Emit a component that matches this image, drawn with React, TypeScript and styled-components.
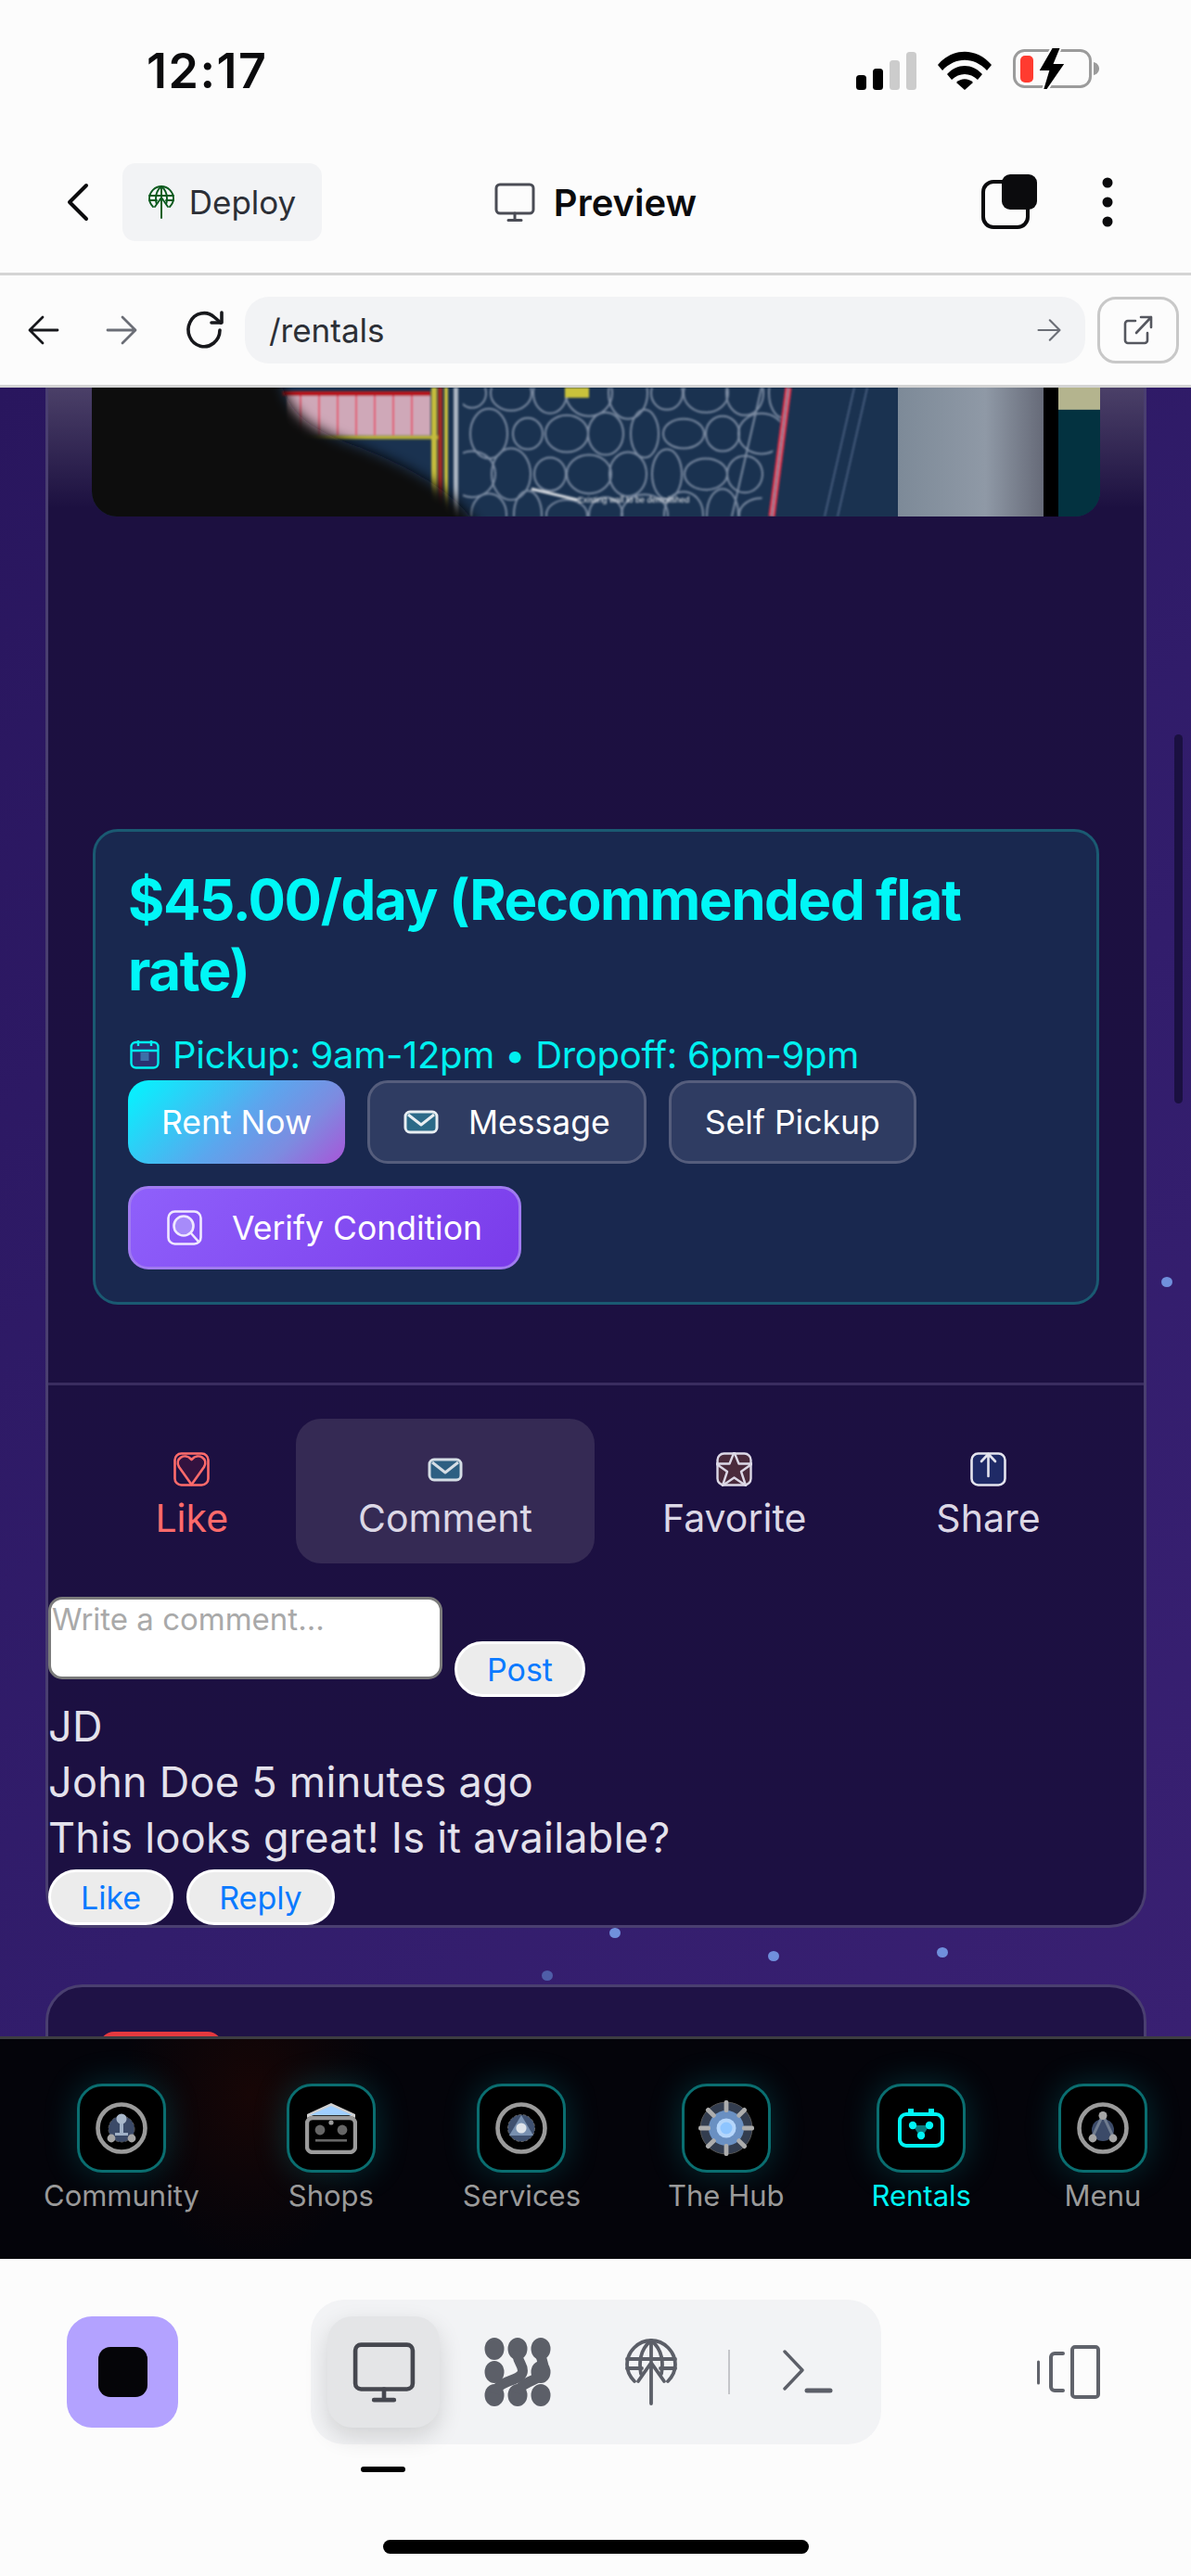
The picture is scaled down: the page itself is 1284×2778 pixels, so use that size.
import styled, { createGlobalStyle } from "styled-components";

const GlobalStyle = createGlobalStyle`
  html, body {
    margin: 0;
    padding: 0;
    background: #fcfcfc;
  }
  * {
    box-sizing: border-box;
  }
  body {
    font-family: "Inter", "Liberation Sans", sans-serif;
  }
`;

const NAV_ITEMS = [
  { label: "Community", icon: <CommunityIcon /> },
  { label: "Shops", icon: <ShopsIcon /> },
  { label: "Services", icon: <ServicesIcon /> },
  { label: "The Hub", icon: <HubIcon /> },
  { label: "Rentals", icon: <RentalsIcon />, active: true },
  { label: "Menu", icon: <MenuIcon /> },
];

const PARTICLES = [
  { x: 1252, y: 959 },
  { x: 657, y: 1661 },
  { x: 828, y: 1686 },
  { x: 1010, y: 1682 },
  { x: 584, y: 1707, dim: true },
];

function App() {
  return (
    <Phone>
      <GlobalStyle />
      <StatusBar>
        <Time>12:17</Time>
        <StatusIcons>
          <SignalIcon />
          <WifiIcon />
          <BatteryIcon />
        </StatusIcons>
      </StatusBar>

      <Header>
        <HeaderLeft>
          <svg width="24" height="42" viewBox="0 0 24 42" fill="none" stroke="#0b0b0d" strokeWidth="4" strokeLinecap="round" strokeLinejoin="round">
            <path d="M21 3 3 21l18 18" />
          </svg>
          <DeployButton>
            <GlobeUpIcon height={36} color="#0b5a1e" />
            Deploy
          </DeployButton>
        </HeaderLeft>
        <HeaderTitle>
          <MonitorIcon size={44} color="#4a4c55" />
          Preview
        </HeaderTitle>
        <HeaderRight>
          <CopyIcon />
          <MoreIcon />
        </HeaderRight>
      </Header>

      <UrlBar>
        <NavArrows>
          <ArrowIcon color="#17181c" size={34} flip />
          <ArrowIcon color="#6b6e76" size={34} />
          <svg width="46" height="46" viewBox="0 0 46 46" fill="none" stroke="#17181c" strokeWidth="3.6" strokeLinecap="round" strokeLinejoin="round">
            <path d="M39 23a17 18 0 1 1-6-14l7 6" />
            <path d="M41 4v11H30" />
          </svg>
        </NavArrows>
        <UrlField>
          /rentals
          <ArrowIcon color="#6b6e76" size={26} />
        </UrlField>
        <OpenButton>
          <svg width="34" height="34" viewBox="0 0 34 34" fill="none" stroke="#55575f" strokeWidth="2.6" strokeLinecap="round" strokeLinejoin="round">
            <path d="M14 7H6a3 3 0 0 0-3 3v18a3 3 0 0 0 3 3h18a3 3 0 0 0 3-3v-8" />
            <path d="M15 20 31 3M20 3h11v11" />
          </svg>
        </OpenButton>
      </UrlBar>

      <Feed>
        {PARTICLES.map((p) => (
          <Particle key={p.x} $x={p.x} $y={p.y} $dim={p.dim} />
        ))}
        <ScrollThumb />

        <PostCard>
          <PostImage>
            <BlueprintArt />
          </PostImage>

          <PriceBox>
            <Price>$45.00/day (Recommended flat rate)</Price>
            <Schedule>
              <CalendarIcon />
              Pickup: 9am-12pm • Dropoff: 6pm-9pm
            </Schedule>
            <ActionButtons>
              <RentButton>Rent Now</RentButton>
              <GhostButton>
                <MailIcon fill="#2b6a88" stroke="#e8eef2" />
                Message
              </GhostButton>
              <GhostButton>Self Pickup</GhostButton>
              <VerifyButton>
                <VerifyIcon />
                Verify Condition
              </VerifyButton>
            </ActionButtons>
          </PriceBox>

          <Reactions>
            <Reaction $color="#ff6b6b">
              <ReactionGlyph>
                <HeartIcon />
              </ReactionGlyph>
              Like
            </Reaction>
            <Reaction $selected>
              <ReactionGlyph>
                <MailIcon fill="#2d5f82" stroke="#d5dde5" />
              </ReactionGlyph>
              Comment
            </Reaction>
            <Reaction>
              <ReactionGlyph>
                <StarIcon />
              </ReactionGlyph>
              Favorite
            </Reaction>
            <Reaction>
              <ReactionGlyph>
                <ShareIcon />
              </ReactionGlyph>
              Share
            </Reaction>
          </Reactions>

          <CommentForm>
            <CommentInput placeholder="Write a comment..." />
            <PostButton>Post</PostButton>
          </CommentForm>

          <CommentLine>JD</CommentLine>
          <CommentLine>John Doe 5 minutes ago</CommentLine>
          <CommentLine>This looks great! Is it available?</CommentLine>
          <CommentActions>
            <PillButton>Like</PillButton>
            <PillButton>Reply</PillButton>
          </CommentActions>
        </PostCard>

        <NextCard>
          <RedBadge />
        </NextCard>
      </Feed>

      <BottomNav>
        {NAV_ITEMS.map((item) => (
          <NavItem key={item.label} $active={item.active}>
            <NavIconBox>{item.icon}</NavIconBox>
            {item.label}
          </NavItem>
        ))}
      </BottomNav>

      <AppBar>
        <AppBarRow>
          <StopButton>
            <StopSquare />
          </StopButton>
          <Toolbar>
            <ToolButton $active>
              <MonitorIcon size={68} color="#45474f" />
            </ToolButton>
            <ToolButton>
              <BlobsIcon />
            </ToolButton>
            <ToolButton>
              <GlobeUpIcon height={72} color="#5c5f68" />
            </ToolButton>
            <ToolDivider />
            <ToolButton>
              <TerminalIcon />
            </ToolButton>
          </Toolbar>
          <DevicesButton>
            <DevicesIcon />
          </DevicesButton>
        </AppBarRow>
        <TabIndicator />
        <HomeBar />
      </AppBar>
    </Phone>
  );
}

/* status bar and header icons */

function SignalIcon() {
  return (
    <svg width="65" height="41" viewBox="0 0 65 41">
      <rect x="0" y="25" width="11" height="16" rx="3.5" fill="#000" />
      <rect x="18" y="18" width="11" height="23" rx="3.5" fill="#000" />
      <rect x="36" y="9" width="11" height="32" rx="3.5" fill="#ccc" />
      <rect x="54" y="0" width="11" height="41" rx="3.5" fill="#ccc" />
    </svg>
  );
}

function WifiIcon() {
  return (
    <svg width="58" height="42" viewBox="0 0 58 42" fill="#000">
      <path d="M0 15C16-4 42-4 58 15l-5 6C39 6 19 6 5 21z" />
      <path d="M10 25c11-12 27-12 38 0l-5 6c-8-8-20-8-28 0z" />
      <path d="M20 34c5-5 13-5 18 0l-9 8z" />
    </svg>
  );
}

function BatteryIcon() {
  return (
    <svg width="94" height="46" viewBox="0 0 94 46">
      <rect x="1.5" y="3.5" width="82" height="39" rx="11" fill="none" stroke="#9b9b9b" strokeWidth="3" />
      <path d="M87 16c4 1 6 4 6 7s-2 6-6 7z" fill="#9b9b9b" />
      <rect x="8" y="9" width="14" height="29" rx="5" fill="#ff3b30" />
      <path d="M42 0 27 26h11l-6 20 5 0 20-29H45l7-17z" fill="#000" stroke="#fcfcfc" strokeWidth="2" />
    </svg>
  );
}

function CopyIcon() {
  return (
    <svg width="60" height="60" viewBox="0 0 60 60">
      <rect x="2" y="8" width="48" height="49" rx="11" fill="none" stroke="#0b0b0d" strokeWidth="4" />
      <rect x="22" y="0" width="38" height="38" rx="9" fill="#0b0b0d" />
    </svg>
  );
}

function MoreIcon() {
  return (
    <svg width="12" height="54" viewBox="0 0 12 54" fill="#0b0b0d">
      <circle cx="6" cy="6" r="5.5" />
      <circle cx="6" cy="27" r="5.5" />
      <circle cx="6" cy="48" r="5.5" />
    </svg>
  );
}

function MonitorIcon({ size, color }: { size: number; color: string }) {
  return (
    <svg width={size} height={size} viewBox="0 0 44 44" fill="none" stroke={color} strokeWidth="3" strokeLinecap="round">
      <rect x="2" y="3" width="40" height="31" rx="4" />
      <path d="M22 34v7M15 41.5h14" />
    </svg>
  );
}

function GlobeUpIcon({ height, color }: { height: number; color: string }) {
  return (
    <svg width={(height * 28) / 36} height={height} viewBox="0 0 28 36" fill="none" stroke={color} strokeWidth="1.9" strokeLinecap="round" strokeLinejoin="round">
      <path d="M5 23C2 20 1 17 1 14 1 7 7 1 14 1s13 6 13 13c0 3-1 6-4 9" />
      <path d="M8.500 19C7 11 9 5 14 1c5 4 7 10 5.500 18" />
      <path d="M1 11h26M1 16h8M19 16h8M14 1v11" />
      <path d="M14 35V14M7 23l7-10 7 10" />
    </svg>
  );
}

function ArrowIcon({ color, size, flip }: { color: string; size: number; flip?: boolean }) {
  return (
    <svg width={size} height={size} viewBox="0 0 34 34" fill="none" stroke={color} strokeWidth="2.8" strokeLinecap="round" strokeLinejoin="round" transform={flip ? "scale(-1 1)" : undefined}>
      <path d="M2 17h29M18 3l14 14-14 14" />
    </svg>
  );
}

/* post card icons */

function CalendarIcon() {
  return (
    <svg width="32" height="32" viewBox="0 0 32 32" stroke="#00f0f0" strokeWidth="2.4" fill="#2a3070">
      <rect x="1.5" y="3" width="29" height="27.5" rx="5" />
      <path d="M1.5 12h29M9 1v6M23 1v6" fill="none" />
      <rect x="11.5" y="14" width="9" height="9" fill="#3b6fa8" stroke="none" />
    </svg>
  );
}

function MailIcon({ fill, stroke }: { fill: string; stroke: string }) {
  return (
    <svg width="38" height="26" viewBox="0 0 38 26" fill={fill} stroke={stroke} strokeWidth="3" strokeLinejoin="round">
      <rect x="2" y="2" width="34" height="22" rx="5" />
      <path d="m5 5 14 11L33 5" fill="none" />
    </svg>
  );
}

function VerifyIcon() {
  return (
    <svg width="38" height="38" viewBox="0 0 38 38" fill="none" stroke="#f0e9ff" strokeWidth="2.6" strokeLinecap="round">
      <rect x="1.5" y="1.5" width="35" height="35" rx="7" />
      <circle cx="18" cy="17" r="10.5" fill="#a78bfa" />
      <path d="m26 25 8 9" />
    </svg>
  );
}

function HeartIcon() {
  return (
    <svg width="39" height="37" viewBox="0 0 39 37" fill="none" stroke="#ff6b6b" strokeWidth="2.6" strokeLinejoin="round">
      <rect x="1.5" y="1.5" width="36" height="34" rx="7" />
      <path d="M19.5 35 6 16C1 7 12 0 19.5 8 27 0 38 7 33 16z" fill="#33123f" />
    </svg>
  );
}

function StarIcon() {
  return (
    <svg width="39" height="37" viewBox="0 0 39 37" stroke="#dcd8e6" strokeWidth="2.4" strokeLinejoin="round">
      <rect x="1.5" y="1.5" width="36" height="34" rx="7" fill="#4a2b3c" />
      <path d="m19.5 0 5 12.5H39L27 21l5 15-12.5-8.5L7 36l5-15L0 12.5h14.5z" fill="#4a2b3c" />
    </svg>
  );
}

function ShareIcon() {
  return (
    <svg width="39" height="37" viewBox="0 0 39 37" fill="#1f2a66" stroke="#e4e4ee" strokeWidth="2.6" strokeLinecap="round" strokeLinejoin="round">
      <rect x="1.5" y="1.5" width="36" height="34" rx="7" />
      <path d="M19.5 26V3M12 10l7.5-8 7.5 8" fill="none" />
    </svg>
  );
}

/* bottom nav icons */

function CommunityIcon() {
  return (
    <svg width="58" height="58" viewBox="0 0 58 58">
      <circle cx="29" cy="29" r="25.5" fill="none" stroke="#9b9b9b" strokeWidth="4.6" />
      <circle cx="29" cy="30" r="14" fill="#3b4a68" stroke="#555" strokeDasharray="3 2" />
      <path d="M27 24h4v10h5v3H22v-3h5z" fill="#9fb0c6" />
      <circle cx="29" cy="19" r="5.5" fill="#a9b8cb" />
      <circle cx="18" cy="40" r="4.4" fill="#a5a5a5" />
      <circle cx="40" cy="40" r="4.4" fill="#a5a5a5" />
    </svg>
  );
}

function ShopsIcon() {
  return (
    <svg width="56" height="56" viewBox="0 0 56 56">
      <path d="M2 13 28 1l26 12v4L28 6 2 17z" fill="#d0d0d0" />
      <path d="M5 14 28 4l23 10z" fill="#9fcfff" />
      <rect x="2" y="17" width="52" height="37" rx="6" fill="#000" stroke="#9b9b9b" strokeWidth="4.4" />
      <circle cx="28" cy="22" r="2.6" fill="#9b9b9b" />
      <circle cx="16" cy="30" r="5.4" fill="#666" />
      <circle cx="40" cy="30" r="5.4" fill="#666" />
      <rect x="11" y="40" width="34" height="2.6" fill="#666" />
    </svg>
  );
}

function ServicesIcon() {
  return (
    <svg width="58" height="58" viewBox="0 0 58 58">
      <circle cx="29" cy="29" r="25.5" fill="none" stroke="#9b9b9b" strokeWidth="4.6" />
      <circle cx="29" cy="29" r="14.5" fill="#3f5170" stroke="#666" strokeDasharray="3 2" />
      <path d="M29 15 42 37H16z" fill="#7890b0" />
      <circle cx="29" cy="29" r="5.6" fill="#dfe4ea" />
    </svg>
  );
}

function HubIcon() {
  const angles = [0, 45, 90, 135, 180, 225, 270, 315];
  return (
    <svg width="60" height="60" viewBox="0 0 60 60">
      <circle cx="30" cy="30" r="28" fill="#333d4f" stroke="#555" />
      <circle cx="30" cy="30" r="19" fill="#6a90c2" />
      <circle cx="30" cy="30" r="10.5" fill="#b5d6fb" />
      <circle cx="30" cy="30" r="6.5" fill="#8ec5ff" />
      {angles.map((a) => (
        <rect key={a} x="27.6" y="0" width="4.8" height="13" rx="2" fill="#adadad" transform={`rotate(${a} 30 30)`} />
      ))}
    </svg>
  );
}

function RentalsIcon() {
  return (
    <svg width="50" height="42" viewBox="0 0 50 42">
      <rect x="2" y="6" width="46" height="34" rx="7" fill="#000" stroke="#00f5f5" strokeWidth="4" />
      <rect x="11" y="0" width="6" height="6" fill="#00f5f5" />
      <rect x="33" y="0" width="6" height="6" fill="#00f5f5" />
      <path d="M16 18h18l-9 14z" fill="#0a7a7d" />
      <circle cx="16" cy="18" r="4.2" fill="#00f5f5" />
      <circle cx="34" cy="18" r="4.2" fill="#00f5f5" />
      <circle cx="25" cy="29" r="4.2" fill="#00f5f5" />
    </svg>
  );
}

function MenuIcon() {
  return (
    <svg width="58" height="58" viewBox="0 0 58 58">
      <circle cx="29" cy="29" r="25.5" fill="none" stroke="#9b9b9b" strokeWidth="4.6" />
      <circle cx="29" cy="31" r="12" fill="#3b4a68" />
      <path d="M29 15 18 38M29 15l11 23" stroke="#6f7c90" strokeWidth="3" fill="none" />
      <circle cx="29" cy="15.500" r="4.5" fill="#a5a5a5" />
      <circle cx="18" cy="40" r="4.400" fill="#a5a5a5" />
      <circle cx="40" cy="40" r="4.400" fill="#a5a5a5" />
    </svg>
  );
}

/* app bar icons */

function BlobsIcon() {
  const rows = [12, 37, 62];
  const cols = [11, 36, 61];
  return (
    <svg width="72" height="74" viewBox="0 0 72 74" fill="#5c5f68">
      {rows.flatMap((y) =>
        cols
          .filter((x) => !(x === 36 && y === 37))
          .map((x) => <ellipse key={`${x}-${y}`} cx={x} cy={y} rx="10.500" ry="12" />),
      )}
      <g fill="none" stroke="#5c5f68" strokeWidth="11">
        <path d="M36 14c-2 12 8 16 5 24-3 9-26 8-30 22" />
        <path d="M61 14c-1 11 6 15 2 24-4 9-23 8-27 22" />
      </g>
    </svg>
  );
}

function TerminalIcon() {
  return (
    <svg width="54" height="48" viewBox="0 0 54 48" fill="none" stroke="#5c5f68" strokeLinecap="round" strokeLinejoin="round">
      <path d="m2 2 19 20L2 42" strokeWidth="3.400" />
      <path d="M26 44h25" strokeWidth="5" />
    </svg>
  );
}

function DevicesIcon() {
  return (
    <svg width="68" height="58" viewBox="0 0 68 58" fill="none" stroke="#60636b" strokeLinecap="round" strokeLinejoin="round">
      <path d="M1.500 18v23" strokeWidth="3" />
      <path d="M28 9h-9a4 4 0 0 0-4 4v32a4 4 0 0 0 4 4h9" strokeWidth="4" />
      <rect x="38" y="2" width="28" height="54" rx="3" strokeWidth="4" />
    </svg>
  );
}

function BlueprintArt() {
  // the listing photo: a blurry floor plan with a dark thumb over the left part
  const cells = [];
  for (let row = 0; row < 4; row++) {
    for (let col = 0; col < 9; col++) {
      const rx = 15 + ((col * 7 + row * 5) % 11);
      const ry = 16 + ((col * 3 + row * 11) % 13);
      cells.push(<ellipse key={`${row}-${col}`} cx={410 + col * 42 + (row % 2) * 18} cy={row * 44 + 6} rx={rx} ry={ry} />);
    }
  }
  return (
    <svg width="100%" height="100%" viewBox="0 0 1087 140" preserveAspectRatio="none">
      <defs>
        <linearGradient id="panel" x1="0" x2="1" y1="0" y2="0">
          <stop offset="0" stopColor="#7d8a98" />
          <stop offset="0.6" stopColor="#8f99a6" />
          <stop offset="1" stopColor="#666a78" />
        </linearGradient>
        <clipPath id="plan">
          <path d="M400 0h350l-32 140H400z" />
        </clipPath>
        <filter id="soft">
          <feGaussianBlur stdDeviation="7" />
        </filter>
        <filter id="slight">
          <feGaussianBlur stdDeviation="0.9" />
        </filter>
      </defs>
      <rect width="1087" height="140" fill="#1a3250" />
      <g filter="url(#slight)">
        <rect x="210" y="4" width="155" height="48" fill="#cfa8b8" />
        <path d="M225 4v48M245 4v48M265 4v48M285 4v48M305 4v48M325 4v48M345 4v48" stroke="#e2506a" strokeWidth="2" />
        <rect x="205" y="4" width="160" height="5" fill="#b5121f" />
        <rect x="205" y="52" width="170" height="4" fill="#b8b038" />
        <rect x="366" y="0" width="6" height="140" fill="#c4bb3c" />
        <rect x="373" y="0" width="5" height="140" fill="#a02b22" />
        <rect x="380" y="0" width="4" height="140" fill="#c4bb3c" />
        <rect x="390" y="0" width="5" height="140" fill="#cfd6df" opacity="0.8" />
        <g clipPath="url(#plan)" fill="none" stroke="#7b8ba2" strokeWidth="2">
          {cells}
        </g>
        <path d="M722 0 690 140" stroke="#7b8ba2" strokeWidth="2" />
        <path d="M751 0 733 140" stroke="#e8304a" strokeWidth="7" />
        <path d="M751 0 733 140" stroke="#7b8ba2" strokeWidth="2" />
        <path d="M822 0 790 140M836 0 804 140" stroke="#51678a" strokeWidth="1.500" />
        <rect x="510" y="0" width="26" height="11" fill="#c9c23a" />
        <path d="M474 110 524 122" stroke="#d9dde3" strokeWidth="3" />
        <text x="524" y="125" fontSize="9" fill="#eef0f3" fontFamily="Liberation Sans">Existing wall to be demolished</text>
      </g>
      <rect x="869" y="0" width="157" height="140" fill="url(#panel)" />
      <rect x="1026" y="0" width="16" height="140" fill="#000" />
      <rect x="1042" y="0" width="45" height="140" fill="#033240" />
      <rect x="1042" y="0" width="45" height="24" fill="#b4b48e" />
      <path d="M-20-20H200c10 40 20 60 90 85 50 20 110 50 130 95H-20z" fill="#08070b" filter="url(#soft)" />
    </svg>
  );
}

const Phone = styled.div`
  width: 1284px;
  height: 2778px;
  display: flex;
  flex-direction: column;
  overflow: hidden;
  background: #fcfcfc;
  color: #0b0b0d;
`;

const StatusBar = styled.div`
  height: 150px;
  flex: none;
  display: flex;
  justify-content: space-between;
  padding: 53px 98px 0 158px;
`;

const Time = styled.div`
  font-size: 52px;
  font-weight: 600;
  line-height: 48px;
  letter-spacing: 1.5px;
`;

const StatusIcons = styled.div`
  display: flex;
  align-items: flex-end;
  gap: 23px;
  height: 44px;
`;

const Header = styled.header`
  height: 147px;
  flex: none;
  display: grid;
  grid-template-columns: 1fr auto 1fr;
  align-items: center;
  padding: 0 72px 8px 72px;
  border-bottom: 3px solid #d4d4d4;
`;

const HeaderLeft = styled.div`
  display: flex;
  align-items: center;
  gap: 36px;
`;

const DeployButton = styled.button`
  width: 215px;
  height: 84px;
  border: none;
  border-radius: 14px;
  background: #f2f3f5;
  display: flex;
  align-items: center;
  justify-content: center;
  gap: 16px;
  font-family: inherit;
  font-size: 35px;
  color: #2c2f36;
`;

const HeaderTitle = styled.div`
  display: flex;
  align-items: center;
  gap: 20px;
  font-size: 40px;
  font-weight: 600;
`;

const HeaderRight = styled.div`
  display: flex;
  align-items: center;
  justify-content: flex-end;
  gap: 70px;
  padding-right: 12px;
`;

const UrlBar = styled.div`
  height: 121px;
  flex: none;
  display: flex;
  align-items: center;
  padding: 0 13px 0 30px;
  border-bottom: 3px solid #d4d4d4;
`;

const NavArrows = styled.div`
  display: flex;
  align-items: center;
  gap: 50px;
  margin-right: 20px;
`;

const UrlField = styled.div`
  width: 906px;
  height: 72px;
  border-radius: 26px;
  background: #f2f3f5;
  display: flex;
  align-items: center;
  justify-content: space-between;
  padding: 0 26px 0 26px;
  font-size: 35px;
  color: #2c2f36;
`;

const OpenButton = styled.button`
  width: 88px;
  height: 72px;
  margin-left: 13px;
  border: 3px solid #c8c8c8;
  border-radius: 20px;
  background: transparent;
  display: flex;
  align-items: center;
  justify-content: center;
  padding: 0;
`;

const Feed = styled.main`
  position: relative;
  height: 1778px;
  flex: none;
  overflow: hidden;
  padding: 0 48px 0 49px;
  background: linear-gradient(135deg, #29165e 0%, #321d6c 60%, #392072 100%);
`;

const Particle = styled.span<{ $x: number; $y: number; $dim?: boolean }>`
  position: absolute;
  left: ${(p) => p.$x}px;
  top: ${(p) => p.$y}px;
  width: 12px;
  height: 11px;
  border-radius: 50%;
  background: ${(p) => (p.$dim ? "#4f5ea8" : "#7090dc")};
`;

const ScrollThumb = styled.span`
  position: absolute;
  left: 1266px;
  top: 374px;
  width: 9px;
  height: 398px;
  border-radius: 5px;
  background: #1a1040;
`;

const PostCard = styled.article`
  border: 3px solid #4a3f70;
  border-top: none;
  border-radius: 0 0 40px 40px;
  background: linear-gradient(180deg, #4b4068 0, #1c1040 130px, #1c1042 100%);
  color: #e4e2ec;
`;

const PostImage = styled.div`
  height: 139px;
  margin: 0 47px;
  border-radius: 0 0 27px 27px;
  overflow: hidden;
  svg {
    display: block;
  }
`;

const PriceBox = styled.section`
  margin: 337px 48px 84px;
  padding: 35px 35px 35px;
  border: 3px solid #1a5a72;
  border-radius: 27px;
  background: #19284f;
`;

const Price = styled.h2`
  margin: 0;
  font-size: 60px;
  line-height: 76px;
  font-weight: 700;
  letter-spacing: -1.4px;
  color: #00f7f7;
`;

const Schedule = styled.div`
  margin-top: 25px;
  height: 56px;
  display: flex;
  align-items: center;
  gap: 14px;
  font-size: 40px;
  letter-spacing: -0.3px;
  color: #00f0f0;
  white-space: nowrap;
  padding-left: 2px;
`;

const ActionButtons = styled.div`
  display: flex;
  flex-wrap: wrap;
  gap: 24px;
`;

const BaseButton = styled.button`
  height: 90px;
  padding: 0 36px;
  border-radius: 22px;
  display: flex;
  align-items: center;
  font-family: inherit;
  font-size: 35.5px;
  color: #fff;
`;

const RentButton = styled(BaseButton)`
  border: none;
  background: linear-gradient(135deg, #00f7ff 0%, #5aa7ee 50%, #7d8be0 75%, #a855d8 100%);
`;

const GhostButton = styled(BaseButton)`
  gap: 32px;
  border: 3px solid #555d7c;
  background: #2f3c62;
`;

const VerifyButton = styled(BaseButton)`
  gap: 32px;
  padding: 0 39px;
  border: 3px solid #a07bf0;
  background: linear-gradient(135deg, #8f60fb 0%, #7a3bea 100%);
`;

const Reactions = styled.div`
  display: flex;
  justify-content: center;
  gap: 6px;
  padding: 36px 0 36px 4px;
  border-top: 3px solid #3a2d60;
`;

const Reaction = styled.button<{ $color?: string; $selected?: boolean }>`
  height: 156px;
  padding: 36px 67px 0;
  border: none;
  border-radius: 27px;
  background: ${(p) => (p.$selected ? "#352a54" : "transparent")};
  color: ${(p) => p.$color ?? "#dcd8e6"};
  font-family: inherit;
  font-size: 41px;
  line-height: 50px;
  display: flex;
  flex-direction: column;
  align-items: center;
  gap: 9px;
`;

const ReactionGlyph = styled.span`
  height: 37px;
  display: flex;
  align-items: center;
  justify-content: center;
`;

const CommentForm = styled.div`
  display: flex;
  gap: 13px;
  height: 110px;
`;

const CommentInput = styled.textarea`
  width: 425px;
  height: 89px;
  padding: 1px;
  border: 3px solid #7b7b7b;
  border-radius: 15px;
  background: #fff;
  resize: none;
  font-family: inherit;
  font-size: 33px;
  &::placeholder {
    color: #a9a9a9;
  }
`;

const PillButton = styled.button`
  height: 60px;
  padding: 0 32px;
  border: 3px solid #fff;
  border-radius: 30px;
  background: #ececec;
  font-family: inherit;
  font-size: 34px;
  color: #0a7aff;
`;

const PostButton = styled(PillButton)`
  margin-top: 48px;
`;

const CommentLine = styled.div`
  font-size: 45px;
  line-height: 60px;
  letter-spacing: 0.27px;
`;

const CommentActions = styled.div`
  display: flex;
  gap: 14px;
  margin-top: 4px;
`;

const NextCard = styled.article`
  height: 200px;
  margin-top: 61px;
  padding: 48px 0 0 55px;
  border: 3px solid #4a3f70;
  border-radius: 40px 40px 0 0;
  background: #1f1246;
`;

const RedBadge = styled.span`
  display: block;
  width: 133px;
  height: 40px;
  border-radius: 16px;
  background: #e5393f;
`;

const BottomNav = styled.nav`
  height: 240px;
  flex: none;
  display: flex;
  justify-content: space-around;
  align-items: flex-start;
  padding-top: 48px;
  border-top: 3px solid #3d3d42;
  background: radial-gradient(ellipse 140px 180px at 270px 25%, #170606, transparent), #04040a;
`;

const NavItem = styled.div<{ $active?: boolean }>`
  display: flex;
  flex-direction: column;
  align-items: center;
  gap: 7px;
  font-size: 31px;
  line-height: 36px;
  color: ${(p) => (p.$active ? "#00f5f5" : "#9a9a9a")};
`;

const NavIconBox = styled.div`
  width: 96px;
  height: 96px;
  border: 3px solid #0a6e70;
  border-radius: 27px;
  background: #000;
  display: flex;
  align-items: center;
  justify-content: center;
  box-shadow: 0 0 36px rgba(0, 200, 205, 0.22);
`;

const AppBar = styled.div`
  height: 342px;
  flex: none;
  display: flex;
  flex-direction: column;
  padding-top: 44px;
  background: #fcfcfc;
`;

const AppBarRow = styled.div`
  height: 156px;
  flex: none;
  display: flex;
  align-items: center;
  padding-left: 72px;
`;

const StopButton = styled.button`
  width: 120px;
  height: 120px;
  border: none;
  border-radius: 27px;
  background: #b3a2ff;
  display: flex;
  align-items: center;
  justify-content: center;
`;

const StopSquare = styled.span`
  width: 53px;
  height: 54px;
  border-radius: 13px;
  background: #050508;
`;

const Toolbar = styled.div`
  width: 615px;
  height: 156px;
  margin-left: 143px;
  padding: 0 18px;
  border-radius: 36px;
  background: #f2f3f5;
  display: flex;
  align-items: center;
  gap: 23px;
`;

const ToolButton = styled.button<{ $active?: boolean }>`
  width: 121px;
  height: 120px;
  flex: none;
  padding: 0;
  border: none;
  border-radius: 27px;
  background: ${(p) => (p.$active ? "#e4e5e7" : "transparent")};
  box-shadow: ${(p) => (p.$active ? "0 10px 26px rgba(0, 0, 0, 0.14)" : "none")};
  display: flex;
  align-items: center;
  justify-content: center;
`;

const ToolDivider = styled.span`
  width: 2px;
  height: 48px;
  flex: none;
  background: #c4c5c9;
`;

const DevicesButton = styled.div`
  margin-left: 168px;
  display: flex;
`;

const TabIndicator = styled.span`
  width: 48px;
  height: 6px;
  margin: 24px 0 0 389px;
  border-radius: 3px;
  background: #000;
`;

const HomeBar = styled.span`
  width: 459px;
  height: 15px;
  margin: 73px auto 0;
  border-radius: 8px;
  background: #000;
`;

export default App;
